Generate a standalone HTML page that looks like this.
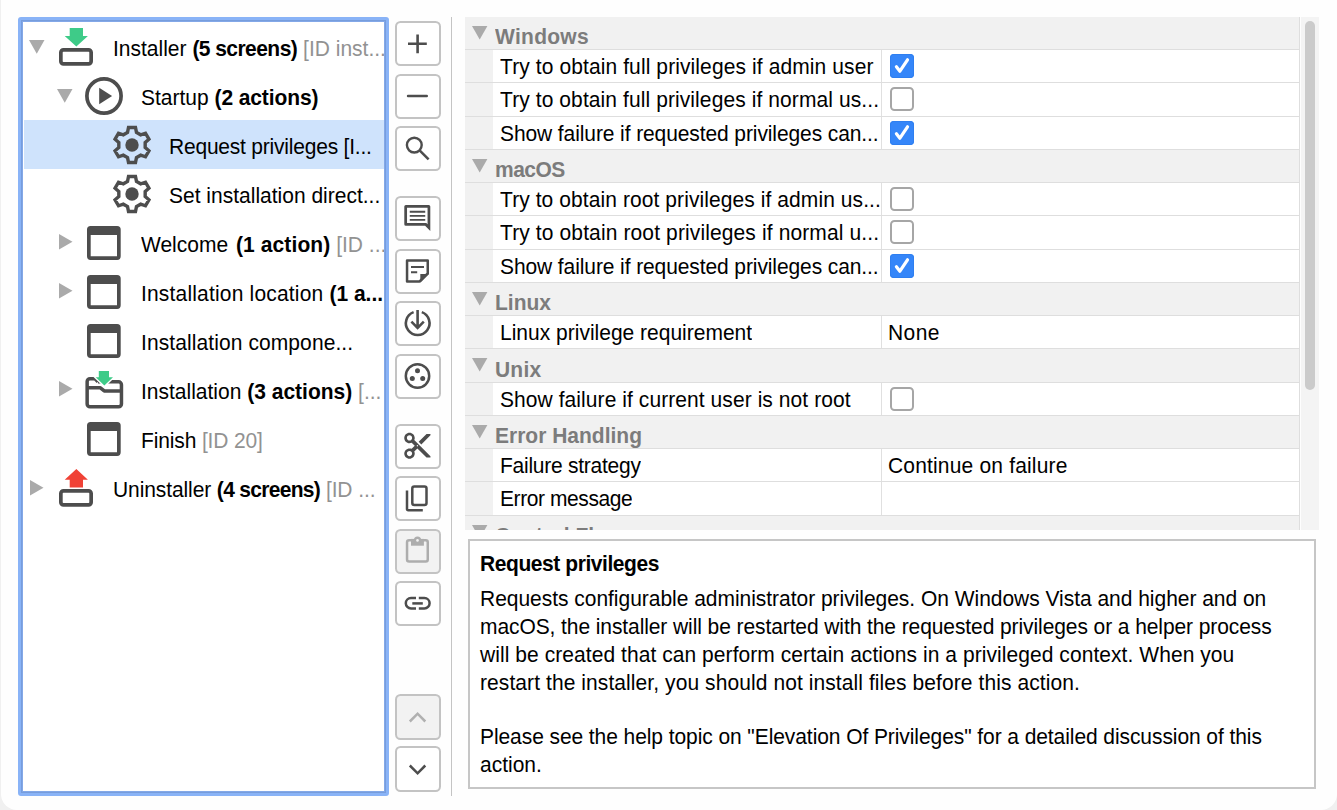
<!DOCTYPE html>
<html><head><meta charset="utf-8"><style>
html,body{margin:0;padding:0;}
body{width:1337px;height:810px;overflow:hidden;background:#f0f0f0;position:relative;font-family:"Liberation Sans",sans-serif;font-size:21px;color:#000;}
.win{position:absolute;left:1px;top:0;width:1336px;height:810px;background:#fefefe;border-bottom-left-radius:16px;border-bottom-right-radius:16px;overflow:hidden;}
.abs{position:absolute;}
.tree{position:absolute;left:18px;top:17px;width:371px;height:779px;box-sizing:border-box;border:3px solid #89b3f7;border-radius:3px;background:#fff;box-shadow:inset 0 0 0 1px #779ddc, inset 0 0 0 2px #83a8e8;}
.sel{position:absolute;left:24px;top:120px;width:360px;height:49px;background:#cfe3fc;}
.t{position:absolute;white-space:pre;line-height:24px;height:24px;transform:scaleY(1.04);transform-origin:0 19.3px;}
.b{font-weight:bold;}
.g{color:#929292;}
.btn{position:absolute;left:394.6px;width:46px;height:45.8px;box-sizing:border-box;border:2px solid #c3c3c3;border-radius:5.5px;background:#fff;}
.btn.dis{background:#f2f2f2;}
.btn svg{position:absolute;left:-1.6px;}
.sep{position:absolute;left:451px;top:17px;width:1px;height:778.5px;background:#c4c4c4;}
.ps{position:absolute;left:465px;top:17px;width:835px;height:513px;overflow:hidden;background:#fff;}
.cat{position:absolute;left:0;width:834px;background:#f1f1f1;}
.row{position:absolute;left:0;width:834px;background:#f1f1f1;}
.hl{position:absolute;left:0;width:834px;height:1px;background:#dedede;}
.cell1{position:absolute;left:28px;width:388px;background:#fff;}
.cell2{position:absolute;left:417px;width:417px;background:#fff;}
.vl{position:absolute;left:416px;width:1px;background:#e0e0e0;}
.rb{position:absolute;left:834px;top:0;width:1px;height:513px;background:#dedede;}
.cb{position:absolute;left:425px;width:24px;height:24px;box-sizing:border-box;border-radius:4px;}
.cb.on{background:#3586f9;box-shadow:inset 0 0 0 1px #2f7ff0;}
.cb.off{border:2px solid #a6a6a6;background:#fff;border-radius:4.5px;}
.sbt{position:absolute;left:1301px;top:17px;width:18px;height:513px;background:#f4f4f4;}
.thumb{position:absolute;left:4px;top:4px;width:10px;height:369px;border-radius:5px;background:#cbcbcb;}
.desc{position:absolute;left:468px;top:538.5px;width:848px;height:250.5px;box-sizing:border-box;border:2px solid #c6c6c6;background:#fff;}
</style></head><body><div class="win">

<div class="abs" style="left:-1px;top:0;width:1337px;height:810px;">
<div class="tree"></div>
<div class="sel"></div>
<div class="abs" style="left:23px;top:22px;width:361px;height:769px;overflow:hidden">
<div class="abs" style="left:-23px;top:-22px;width:1337px;height:810px;">
<svg class="abs" style="left:29px;top:40px" width="16" height="15"><path d="M0 0 L15.5 0 L7.75 13.8 Z" fill="#aaaaaa"/></svg>
<svg class="abs" style="left:59px;top:22px" width="36" height="46"><path d="M10.7 6 H24 V14 H28.9 L17.35 24.4 L5.7 14 H10.7 Z" fill="#3ecb88"/><rect x="1.85" y="27.85" width="30.3" height="14" rx="2.6" fill="none" stroke="#4d4d4d" stroke-width="3.7"/></svg>
<div class="t" style="left:113px;top:36.7px"><span>Installer </span><span class="b" style="letter-spacing:-0.55px">(5 screens)</span><span> </span><span class="g">[ID inst...</span></div>
<svg class="abs" style="left:57px;top:89px" width="16" height="15"><path d="M0 0 L15.5 0 L7.75 13.8 Z" fill="#aaaaaa"/></svg>
<svg class="abs" style="left:85px;top:77px" width="40" height="40"><circle cx="19" cy="19" r="17.1" fill="none" stroke="#4d4d4d" stroke-width="3.7"/><path d="M14.2 10.7 L27.1 19 L14.2 27.3 Z" fill="#4d4d4d"/></svg>
<div class="t" style="left:141px;top:85.7px"><span>Startup </span><span class="b" style="letter-spacing:-0.11px">(2 actions)</span></div>
<svg class="abs" style="left:112.19999999999999px;top:124.9px" width="40" height="40"><path d="M15.53 7.37 L16.52 2.44 L23.48 2.44 L24.47 7.37 L28.70 9.81 L33.47 8.21 L36.95 14.23 L33.18 17.56 L33.18 22.44 L36.95 25.77 L33.47 31.79 L28.70 30.19 L24.47 32.63 L23.48 37.56 L16.52 37.56 L15.53 32.63 L11.30 30.19 L6.53 31.79 L3.05 25.77 L6.82 22.44 L6.82 17.56 L3.05 14.23 L6.53 8.21 L11.30 9.81 Z" fill="none" stroke="#4d4d4d" stroke-width="3.4" stroke-linejoin="miter"/><circle cx="20" cy="20" r="6.7" fill="#4d4d4d"/></svg>
<div class="t" style="left:169px;top:134.7px"><span style="letter-spacing:-0.21px">Request privileges [I...</span></div>
<svg class="abs" style="left:112.19999999999999px;top:173.9px" width="40" height="40"><path d="M15.53 7.37 L16.52 2.44 L23.48 2.44 L24.47 7.37 L28.70 9.81 L33.47 8.21 L36.95 14.23 L33.18 17.56 L33.18 22.44 L36.95 25.77 L33.47 31.79 L28.70 30.19 L24.47 32.63 L23.48 37.56 L16.52 37.56 L15.53 32.63 L11.30 30.19 L6.53 31.79 L3.05 25.77 L6.82 22.44 L6.82 17.56 L3.05 14.23 L6.53 8.21 L11.30 9.81 Z" fill="none" stroke="#4d4d4d" stroke-width="3.4" stroke-linejoin="miter"/><circle cx="20" cy="20" r="6.7" fill="#4d4d4d"/></svg>
<div class="t" style="left:169px;top:183.7px"><span>Set installation direct...</span></div>
<svg class="abs" style="left:59px;top:234.4px" width="15" height="16"><path d="M0 0 L13.5 7.7 L0 15.4 Z" fill="#aaaaaa"/></svg>
<svg class="abs" style="left:87.3px;top:226px" width="36" height="36"><path d="M3.6 0 H30.1 A3.6 3.6 0 0 1 33.7 3.6 V30.3 A3.6 3.6 0 0 1 30.1 33.9 H3.6 A3.6 3.6 0 0 1 0 30.3 V3.6 A3.6 3.6 0 0 1 3.6 0 Z M3.7 9 V30.2 H30 V9 Z" fill="#4d4d4d" fill-rule="evenodd"/></svg>
<div class="t" style="left:141px;top:232.7px"><span>Welcome </span><span class="b" style="letter-spacing:0.1px;margin-left:2px">(1 action)</span><span> </span><span class="g">[ID ...</span></div>
<svg class="abs" style="left:59px;top:283.4px" width="15" height="16"><path d="M0 0 L13.5 7.7 L0 15.4 Z" fill="#aaaaaa"/></svg>
<svg class="abs" style="left:87.3px;top:275px" width="36" height="36"><path d="M3.6 0 H30.1 A3.6 3.6 0 0 1 33.7 3.6 V30.3 A3.6 3.6 0 0 1 30.1 33.9 H3.6 A3.6 3.6 0 0 1 0 30.3 V3.6 A3.6 3.6 0 0 1 3.6 0 Z M3.7 9 V30.2 H30 V9 Z" fill="#4d4d4d" fill-rule="evenodd"/></svg>
<div class="t" style="left:141px;top:281.7px"><span style="letter-spacing:0.18px">Installation location </span><span class="b">(1 a...</span></div>
<svg class="abs" style="left:87.3px;top:324px" width="36" height="36"><path d="M3.6 0 H30.1 A3.6 3.6 0 0 1 33.7 3.6 V30.3 A3.6 3.6 0 0 1 30.1 33.9 H3.6 A3.6 3.6 0 0 1 0 30.3 V3.6 A3.6 3.6 0 0 1 3.6 0 Z M3.7 9 V30.2 H30 V9 Z" fill="#4d4d4d" fill-rule="evenodd"/></svg>
<div class="t" style="left:141px;top:330.7px"><span style="letter-spacing:0.09px">Installation compone...</span></div>
<svg class="abs" style="left:59px;top:381.4px" width="15" height="16"><path d="M0 0 L13.5 7.7 L0 15.4 Z" fill="#aaaaaa"/></svg>
<svg class="abs" style="left:80px;top:365px" width="50" height="50"><path d="M18 16.85 H38.6 A2.85 2.85 0 0 1 41.45 19.7 V38.9 A2.85 2.85 0 0 1 38.6 41.75 H10 A2.85 2.85 0 0 1 7.15 38.9 V16.6 A2.85 2.85 0 0 1 10 13.75 H15 L18 16.85" fill="none" stroke="#4d4d4d" stroke-width="3.5"/><path d="M7.15 22.8 H20.4 L24.2 25.9 H41.45" fill="none" stroke="#4d4d4d" stroke-width="3.5" stroke-linejoin="round"/><path d="M18.8 5.9 H29 V12.3 H33 L24.35 20.6 L15.7 12.3 H18.8 Z" fill="#3ecb88" stroke="#fff" stroke-width="2.6" paint-order="stroke" stroke-linejoin="miter"/></svg>
<div class="t" style="left:141px;top:379.7px"><span>Installation </span><span class="b">(3 actions)</span><span> </span><span class="g">[...</span></div>
<svg class="abs" style="left:87.3px;top:422px" width="36" height="36"><path d="M3.6 0 H30.1 A3.6 3.6 0 0 1 33.7 3.6 V30.3 A3.6 3.6 0 0 1 30.1 33.9 H3.6 A3.6 3.6 0 0 1 0 30.3 V3.6 A3.6 3.6 0 0 1 3.6 0 Z M3.7 9 V30.2 H30 V9 Z" fill="#4d4d4d" fill-rule="evenodd"/></svg>
<div class="t" style="left:141px;top:428.7px"><span style="letter-spacing:-0.14px">Finish </span><span class="g" style="letter-spacing:-0.14px">[ID 20]</span></div>
<svg class="abs" style="left:30px;top:480.4px" width="15" height="16"><path d="M0 0 L13.5 7.7 L0 15.4 Z" fill="#aaaaaa"/></svg>
<svg class="abs" style="left:59px;top:463px" width="36" height="46"><path d="M17.35 6 L28.9 16.7 H24 V24.4 H10.7 V16.7 H5.7 Z" fill="#f04236"/><rect x="1.85" y="27.85" width="30.3" height="14" rx="2.6" fill="none" stroke="#4d4d4d" stroke-width="3.7"/></svg>
<div class="t" style="left:113px;top:477.7px"><span style="letter-spacing:-0.1px">Uninstaller </span><span class="b" style="letter-spacing:-0.7px">(4 screens)</span><span> </span><span class="g" style="letter-spacing:-0.1px">[ID ...</span></div>
</div></div>
<div class="btn" style="top:20.50px"><svg width="46" height="46" style="top:-1.90px"><path d="M13 22.8 H31.8 M22.6 13.6 V32.2" fill="none" stroke="#4d4d4d" stroke-width="2.6"/></svg></div>
<div class="btn" style="top:73.50px"><svg width="46" height="46" style="top:-1.50px"><path d="M13 22 H31.8" fill="none" stroke="#4d4d4d" stroke-width="2.4" stroke-linecap="round"/></svg></div>
<div class="btn" style="top:125.70px"><svg width="46" height="46" style="top:-1.70px"><circle cx="19.3" cy="19.1" r="7.4" fill="none" stroke="#4d4d4d" stroke-width="2.4"/><path d="M24.6 24.4 L33.6 33.4" stroke="#4d4d4d" stroke-width="2.5"/></svg></div>
<div class="btn" style="top:195.50px"><svg width="46" height="46" style="top:-1.50px"><g transform="translate(6.7 6.4) scale(1.3)"><path fill="#4d4d4d" fill-rule="evenodd" d="M3.2 2H20.8A1.2 1.2 0 0 1 22 3.2V22L18 18H3.2A1.2 1.2 0 0 1 2 16.8V3.2A1.2 1.2 0 0 1 3.2 2ZM4.1 4.1V15.9H18.9L19.9 16.9V4.1Z"/><path fill="#4d4d4d" d="M6.2 6.5H18.1V8H6.2ZM6.2 9.6H18.1V11.1H6.2ZM6.2 12.7H18.1V14.2H6.2Z"/></g></svg></div>
<div class="btn" style="top:248.70px"><svg width="46" height="46" style="top:-1.70px"><path d="M12.05 11.45 H32.75 V24.4 L24.6 32.45 H12.05 Z" fill="none" stroke="#4d4d4d" stroke-width="2.5" stroke-linejoin="round"/><path d="M25.3 25 H34 L25.3 33.7 Z" fill="#4d4d4d"/><path d="M16 17.9 H29 M16 23.2 H22.2" stroke="#4d4d4d" stroke-width="2"/></svg></div>
<div class="btn" style="top:300.50px"><svg width="46" height="46" style="top:-1.50px"><path d="M18.6 11.1 A11.8 11.8 0 1 0 26.8 11.1" fill="none" stroke="#4d4d4d" stroke-width="2.6"/><path d="M22.6 9 V27.4 M16.4 20.7 L22.6 26.9 L28.8 20.7" fill="none" stroke="#4d4d4d" stroke-width="2.6"/></svg></div>
<div class="btn" style="top:353.70px"><svg width="46" height="46" style="top:-1.70px"><circle cx="22.5" cy="22" r="11.7" fill="none" stroke="#4d4d4d" stroke-width="2.5"/><circle cx="22.5" cy="16.7" r="2.5" fill="#4d4d4d"/><circle cx="17.3" cy="24.5" r="2.5" fill="#4d4d4d"/><circle cx="27.7" cy="24.5" r="2.5" fill="#4d4d4d"/></svg></div>
<div class="btn" style="top:423.70px"><svg width="46" height="46" style="top:-1.70px"><g transform="translate(6.64 6.04) scale(1.31)"><path fill="#4d4d4d" fill-rule="nonzero" d="M9.64 7.64c.23-.5.36-1.05.36-1.64 0-2.21-1.79-4-4-4S2 3.79 2 6s1.790 4 4 4c.59 0 1.14-.13 1.64-.36L10 12l-2.36 2.36C7.140 14.13 6.59 14 6 14c-2.21 0-4 1.79-4 4s1.79 4 4 4 4-1.79 4-4c0-.59-.13-1.14-.36-1.64L12 14l7 7h3v-1L9.64 7.64zM6 8c-1.1 0-2-.89-2-2s.9-2 2-2 2 .89 2 2-.9 2-2 2zm0 12c-1.1 0-2-.89-2-2s.9-2 2-2 2 .89 2 2-.9 2-2 2zm6-7.5c-.28 0-.5-.22-.5-.5s.22-.5.5-.5.5.22.5.5-.22.5-.5.5zM19 3l-6 6 2 2 7-7V3z"/></g></svg></div>
<div class="btn" style="top:475.70px"><svg width="46" height="46" style="top:-1.70px"><rect x="17.3" y="10.6" width="14.2" height="18.3" rx="2" fill="none" stroke="#4d4d4d" stroke-width="2.5"/><path d="M12 14.5 V33 A1.2 1.2 0 0 0 13.2 34.3 H27.8" fill="none" stroke="#4d4d4d" stroke-width="2.5"/></svg></div>
<div class="btn dis" style="top:528.70px"><svg width="46" height="46" style="top:-1.70px"><rect x="12.05" y="11.15" width="20.7" height="21.3" rx="2" fill="none" stroke="#adadad" stroke-width="2.5"/><path d="M16 9.9 H28.9 V16.7 H16 Z" fill="#adadad"/><circle cx="22.5" cy="11.2" r="3.6" fill="#adadad"/><circle cx="22.5" cy="11.4" r="1.3" fill="#f2f2f2"/></svg></div>
<div class="btn" style="top:580.70px"><svg width="46" height="46" style="top:-1.70px"><path d="M21 17.05 H16 A5.2 5.2 0 0 0 16 27.45 H21 M23.8 17.05 H29.4 A5.2 5.2 0 0 1 29.4 27.45 H23.8" fill="none" stroke="#4d4d4d" stroke-width="2.5"/><path d="M17.3 22.4 H27.8" stroke="#4d4d4d" stroke-width="2.5"/></svg></div>
<div class="btn dis" style="top:694.30px"><svg width="46" height="46" style="top:-1.30px"><path d="M14.8 26.5 L22.6 18.7 L30.3 26.5" fill="none" stroke="#b0b0b0" stroke-width="2.5"/></svg></div>
<div class="btn" style="top:746.30px"><svg width="46" height="46" style="top:-1.30px"><path d="M14.8 18.5 L22.6 26.3 L30.3 18.5" fill="none" stroke="#4d4d4d" stroke-width="2.5"/></svg></div>
<div class="sep"></div>
<div class="ps">
<div class="cat" style="top:0.00px;height:33.00px"></div>
<svg class="abs" style="left:7px;top:8.80px" width="16" height="15"><path d="M0 0 L15.4 0 L7.7 13.6 Z" fill="#aaaaaa"/></svg>
<div class="t b" style="left:30px;top:8.10px;color:#7c7c7c;letter-spacing:0.28px">Windows</div>
<div class="hl" style="top:32.00px"></div>
<div class="row" style="top:33.00px;height:32.25px"></div>
<div class="cell1" style="top:33.00px;height:32.25px"></div>
<div class="cell2" style="top:33.00px;height:32.25px"></div>
<div class="vl" style="top:33.00px;height:32.25px"></div>
<div class="t" style="left:35px;top:38.05px;letter-spacing:0.1px;max-width:381px;overflow:hidden">Try to obtain full privileges if admin user</div>
<div class="cb on" style="top:37.12px"><svg class="abs" style="left:0;top:0" width="24" height="24"><path d="M6.4 12.7 L9.9 17.2 L17.5 5.8" fill="none" stroke="#fff" stroke-width="3.2" stroke-linecap="round" stroke-linejoin="round"/></svg></div>
<div class="hl" style="top:65.25px"></div>
<div class="row" style="top:66.25px;height:32.25px"></div>
<div class="cell1" style="top:66.25px;height:32.25px"></div>
<div class="cell2" style="top:66.25px;height:32.25px"></div>
<div class="vl" style="top:66.25px;height:32.25px"></div>
<div class="t" style="left:35px;top:71.30px;letter-spacing:0.09px;max-width:381px;overflow:hidden">Try to obtain full privileges if normal us...</div>
<div class="cb off" style="top:70.38px"></div>
<div class="hl" style="top:98.50px"></div>
<div class="row" style="top:99.50px;height:32.25px"></div>
<div class="cell1" style="top:99.50px;height:32.25px"></div>
<div class="cell2" style="top:99.50px;height:32.25px"></div>
<div class="vl" style="top:99.50px;height:32.25px"></div>
<div class="t" style="left:35px;top:104.55px;letter-spacing:-0.1px;max-width:381px;overflow:hidden">Show failure if requested privileges can...</div>
<div class="cb on" style="top:103.62px"><svg class="abs" style="left:0;top:0" width="24" height="24"><path d="M6.4 12.7 L9.9 17.2 L17.5 5.8" fill="none" stroke="#fff" stroke-width="3.2" stroke-linecap="round" stroke-linejoin="round"/></svg></div>
<div class="hl" style="top:131.75px"></div>
<div class="cat" style="top:132.75px;height:33.25px"></div>
<svg class="abs" style="left:7px;top:141.80px" width="16" height="15"><path d="M0 0 L15.4 0 L7.7 13.6 Z" fill="#aaaaaa"/></svg>
<div class="t b" style="left:30px;top:141.10px;color:#7c7c7c;letter-spacing:-0.5px">macOS</div>
<div class="hl" style="top:165.00px"></div>
<div class="row" style="top:166.00px;height:32.25px"></div>
<div class="cell1" style="top:166.00px;height:32.25px"></div>
<div class="cell2" style="top:166.00px;height:32.25px"></div>
<div class="vl" style="top:166.00px;height:32.25px"></div>
<div class="t" style="left:35px;top:171.05px;letter-spacing:0.08px;max-width:381px;overflow:hidden">Try to obtain root privileges if admin us...</div>
<div class="cb off" style="top:170.12px"></div>
<div class="hl" style="top:198.25px"></div>
<div class="row" style="top:199.25px;height:32.25px"></div>
<div class="cell1" style="top:199.25px;height:32.25px"></div>
<div class="cell2" style="top:199.25px;height:32.25px"></div>
<div class="vl" style="top:199.25px;height:32.25px"></div>
<div class="t" style="left:35px;top:204.30px;letter-spacing:0.12px;max-width:381px;overflow:hidden">Try to obtain root privileges if normal u...</div>
<div class="cb off" style="top:203.38px"></div>
<div class="hl" style="top:231.50px"></div>
<div class="row" style="top:232.50px;height:32.25px"></div>
<div class="cell1" style="top:232.50px;height:32.25px"></div>
<div class="cell2" style="top:232.50px;height:32.25px"></div>
<div class="vl" style="top:232.50px;height:32.25px"></div>
<div class="t" style="left:35px;top:237.55px;letter-spacing:-0.1px;max-width:381px;overflow:hidden">Show failure if requested privileges can...</div>
<div class="cb on" style="top:236.62px"><svg class="abs" style="left:0;top:0" width="24" height="24"><path d="M6.4 12.7 L9.9 17.2 L17.5 5.8" fill="none" stroke="#fff" stroke-width="3.2" stroke-linecap="round" stroke-linejoin="round"/></svg></div>
<div class="hl" style="top:264.75px"></div>
<div class="cat" style="top:265.75px;height:33.25px"></div>
<svg class="abs" style="left:7px;top:274.80px" width="16" height="15"><path d="M0 0 L15.4 0 L7.7 13.6 Z" fill="#aaaaaa"/></svg>
<div class="t b" style="left:30px;top:274.10px;color:#7c7c7c;letter-spacing:0px">Linux</div>
<div class="hl" style="top:298.00px"></div>
<div class="row" style="top:299.00px;height:32.25px"></div>
<div class="cell1" style="top:299.00px;height:32.25px"></div>
<div class="cell2" style="top:299.00px;height:32.25px"></div>
<div class="vl" style="top:299.00px;height:32.25px"></div>
<div class="t" style="left:35px;top:304.05px;letter-spacing:0px;max-width:381px;overflow:hidden">Linux privilege requirement</div>
<div class="t" style="left:423px;top:304.05px;letter-spacing:0.4px">None</div>
<div class="hl" style="top:331.25px"></div>
<div class="cat" style="top:332.25px;height:33.25px"></div>
<svg class="abs" style="left:7px;top:341.30px" width="16" height="15"><path d="M0 0 L15.4 0 L7.7 13.6 Z" fill="#aaaaaa"/></svg>
<div class="t b" style="left:30px;top:340.60px;color:#7c7c7c;letter-spacing:0.2px">Unix</div>
<div class="hl" style="top:364.50px"></div>
<div class="row" style="top:365.50px;height:32.25px"></div>
<div class="cell1" style="top:365.50px;height:32.25px"></div>
<div class="cell2" style="top:365.50px;height:32.25px"></div>
<div class="vl" style="top:365.50px;height:32.25px"></div>
<div class="t" style="left:35px;top:370.55px;letter-spacing:0.07px;max-width:381px;overflow:hidden">Show failure if current user is not root</div>
<div class="cb off" style="top:369.62px"></div>
<div class="hl" style="top:397.75px"></div>
<div class="cat" style="top:398.75px;height:33.25px"></div>
<svg class="abs" style="left:7px;top:407.80px" width="16" height="15"><path d="M0 0 L15.4 0 L7.7 13.6 Z" fill="#aaaaaa"/></svg>
<div class="t b" style="left:30px;top:407.10px;color:#7c7c7c;letter-spacing:0px">Error Handling</div>
<div class="hl" style="top:431.00px"></div>
<div class="row" style="top:432.00px;height:32.25px"></div>
<div class="cell1" style="top:432.00px;height:32.25px"></div>
<div class="cell2" style="top:432.00px;height:32.25px"></div>
<div class="vl" style="top:432.00px;height:32.25px"></div>
<div class="t" style="left:35px;top:437.05px;letter-spacing:-0.25px;max-width:381px;overflow:hidden">Failure strategy</div>
<div class="t" style="left:423px;top:437.05px;letter-spacing:0.17px">Continue on failure</div>
<div class="hl" style="top:464.25px"></div>
<div class="row" style="top:465.25px;height:32.25px"></div>
<div class="cell1" style="top:465.25px;height:32.25px"></div>
<div class="cell2" style="top:465.25px;height:32.25px"></div>
<div class="vl" style="top:465.25px;height:32.25px"></div>
<div class="t" style="left:35px;top:470.30px;letter-spacing:-0.42px;max-width:381px;overflow:hidden">Error message</div>
<div class="t" style="left:423px;top:470.30px;letter-spacing:0px"></div>
<div class="hl" style="top:497.50px"></div>
<div class="cat" style="top:498.50px;height:33.25px"></div>
<svg class="abs" style="left:7px;top:507.55px" width="16" height="15"><path d="M0 0 L15.4 0 L7.7 13.6 Z" fill="#aaaaaa"/></svg>
<div class="t b" style="left:30px;top:506.85px;color:#7c7c7c;letter-spacing:0px">Control Flow</div>
<div class="hl" style="top:530.75px"></div>
<div class="rb"></div>
</div>
<div class="sbt"><div class="thumb"></div></div>
<div class="desc"></div>
<div class="t" style="left:480px;top:551.7px;letter-spacing:-0.43px"><span class="b">Request privileges</span></div>
<div class="t" style="left:480px;top:586.7px;letter-spacing:-0.03px">Requests configurable administrator privileges. On Windows Vista and higher and on</div>
<div class="t" style="left:480px;top:614.7px;letter-spacing:-0.09px">macOS, the installer will be restarted with the requested privileges or a helper process</div>
<div class="t" style="left:480px;top:642.7px;letter-spacing:0.06px">will be created that can perform certain actions in a privileged context. When you</div>
<div class="t" style="left:480px;top:670.7px;letter-spacing:0.08px">restart the installer, you should not install files before this action.</div>
<div class="t" style="left:480px;top:724.7px;letter-spacing:-0.08px">Please see the help topic on "Elevation Of Privileges" for a detailed discussion of this</div>
<div class="t" style="left:480px;top:752.7px;letter-spacing:0px">action.</div>
</div></div></body></html>
